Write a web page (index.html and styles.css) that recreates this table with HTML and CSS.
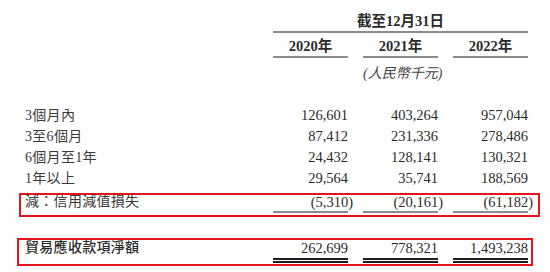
FILE: index.html
```html
<!DOCTYPE html>
<html lang='zh-Hant'>

<head>
    <meta charset='UTF-8'>
    <title>貿易應收款項賬齡</title>
    <link rel="stylesheet" href="styles.css">
</head>

<body>
    <div class="sheet">
        <!-- column heads -->
        <div class="row title-row">
            <span></span>
            <span class="title">截至12月31日</span>
        </div>
        <div class="row year-row">
            <span></span>
            <span class="year">2020年</span>
            <span class="year">2021年</span>
            <span class="year">2022年</span>
        </div>
        <div class="row unit-row">
            <span></span>
            <span></span>
            <span class="unit">(人民幣千元)</span>
            <span></span>
        </div>

        <!-- ageing rows -->
        <div class="row data first">
            <span class="label">3個月內</span>
            <span class="num">126,601</span>
            <span class="num">403,264</span>
            <span class="num">957,044</span>
        </div>
        <div class="row data">
            <span class="label">3至6個月</span>
            <span class="num">87,412</span>
            <span class="num">231,336</span>
            <span class="num">278,486</span>
        </div>
        <div class="row data">
            <span class="label">6個月至1年</span>
            <span class="num">24,432</span>
            <span class="num">128,141</span>
            <span class="num">130,321</span>
        </div>
        <div class="row data">
            <span class="label">1年以上</span>
            <span class="num">29,564</span>
            <span class="num">35,741</span>
            <span class="num">188,569</span>
        </div>

        <div class="row box less">
            <span class="label">減：信用減值損失</span>
            <span class="num sub">(5,310<span class="paren">)</span></span>
            <span class="num sub">(20,161<span class="paren">)</span></span>
            <span class="num sub">(61,182<span class="paren">)</span></span>
        </div>

        <div class="row box total">
            <span class="label">貿易應收款項淨額</span>
            <span class="num sum">262,699</span>
            <span class="num sum gap">778,321</span>
            <span class="num sum gap">1,493,238</span>
        </div>
    </div>
</body>

</html>
```

FILE: styles.css
```css
* {
    padding: 0;
    margin: 0;
    box-sizing: border-box;
}

body {
    background: #fff;
    color: #2b2b2b;
    font-family: "Liberation Serif", "Noto Sans CJK TC", serif;
    font-size: 14.5px;
}

.sheet {
    display: flex;
    flex-direction: column;
}

.row {
    display: grid;
    grid-template-columns: 1fr 75px 75px 75px;
    column-gap: 15px;
    padding: 0 22px 0 25px;
}

.title-row {
    padding-top: 11px;
    line-height: 20px;
}

.title {
    grid-column: 2 / 5;
    text-align: center;
    font-weight: bold;
    border-bottom: #8c8c8c solid 2px;
}

.year-row {
    margin-top: 3px;
    line-height: 20px;
}

.year {
    text-align: center;
    font-weight: bold;
    border-bottom: #8c8c8c solid 2px;
}

.unit-row {
    margin-top: 6px;
    line-height: 20px;
}

.unit {
    text-align: center;
    font-style: italic;
    font-size: 14px;
    color: #444;
    white-space: nowrap;
}

.data {
    line-height: 21px;
}

.data.first {
    margin-top: 21px;
}

.label {
    font-size: 14px;
    color: #3a3a3a;
    letter-spacing: 0.3px;
    white-space: nowrap;
}

.num {
    text-align: right;
    white-space: nowrap;
}

.paren {
    margin-right: -5px;
}

.box {
    border: #e8141c solid 2px;
}

.less {
    margin: 4px 10px 0 19px;
    padding: 0 10px 2px 4px;
    line-height: 14px;
}

.sub {
    padding-bottom: 2px;
    border-bottom: #8c8c8c solid 2px;
}

.total {
    margin: 21px 17px 0 17px;
    padding: 0 3px 1px 6px;
    line-height: 16px;
}

.total .label {
    font-weight: 500;
    color: #2b2b2b;
}

.sum {
    padding-bottom: 2px;
    border-bottom: #1e1e1e double 5px;
}

/* white gaps break the red line under the column gaps */
.gap {
    position: relative;
}

.gap::after {
    content: '';
    position: absolute;
    left: -15px;
    bottom: -4px;
    width: 15px;
    height: 4px;
    background: #fff;
}
```
